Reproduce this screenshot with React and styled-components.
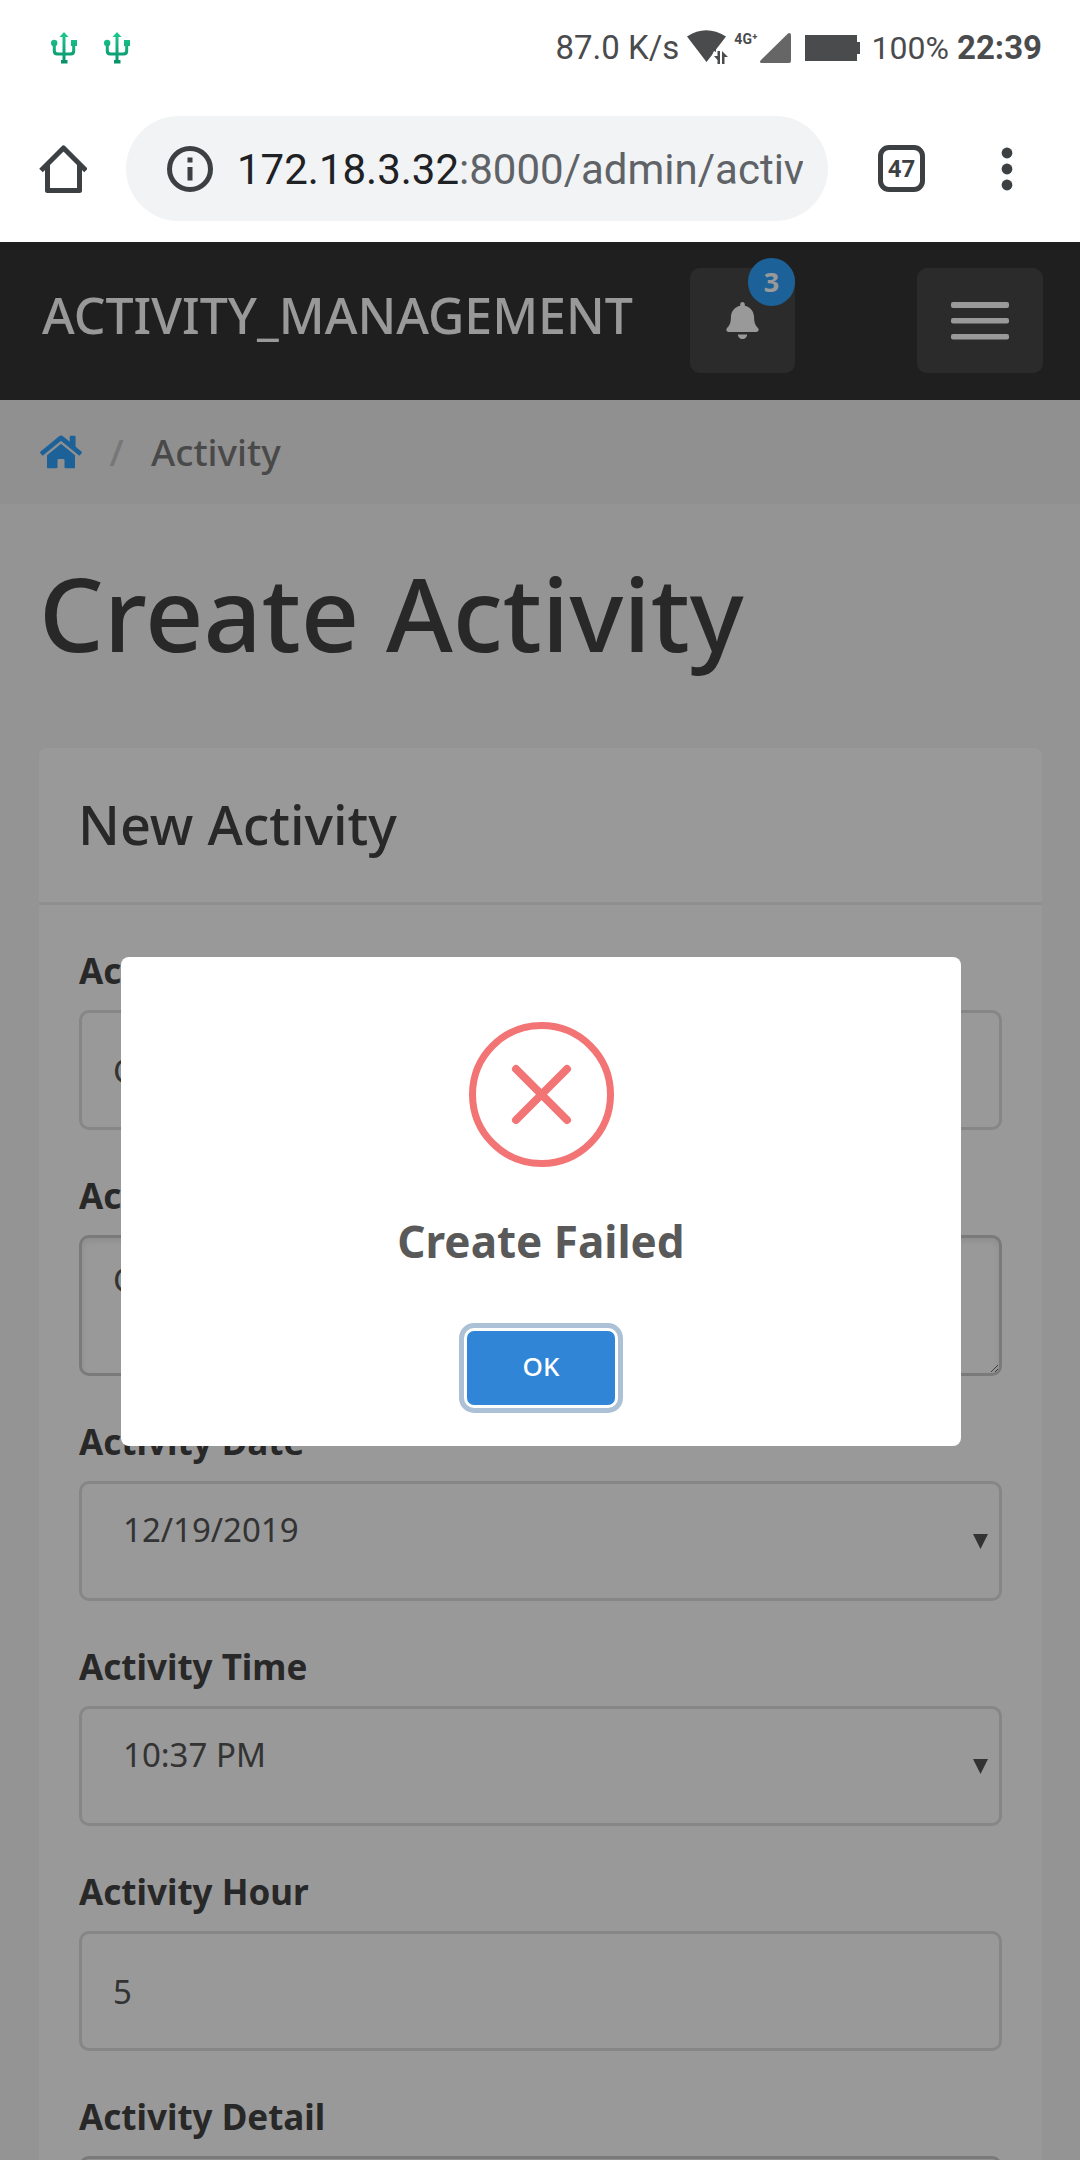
import React from "react";
import styled, { createGlobalStyle } from "styled-components";
import { FaBell, FaHome } from "react-icons/fa";

const GlobalStyle = createGlobalStyle`
  *, *::before, *::after { box-sizing: border-box; }
  body { margin: 0; background: #fff; }
  button, input, textarea, select { font: inherit; color: inherit; margin: 0; }
`;

const siteFont = `"Noto Sans", "Open Sans", sans-serif`;

const Phone = styled.div`
  display: flex;
  flex-direction: column;
  height: 100vh;
  overflow: hidden;
  font-family: Roboto, sans-serif;
`;

/* ---------- phone status bar ---------- */

const StatusBar = styled.div`
  display: flex;
  align-items: center;
  justify-content: space-between;
  flex: none;
  height: 96px;
  padding: 0 38px 0 51px;
  color: #4a4b4d;
  font-size: 33px;
  line-height: 40px;
  white-space: nowrap;
`;

const StatusGroup = styled.div`
  display: flex;
  align-items: center;
  gap: ${(p) => p.$gap}px;
`;

const Network = styled.span`
  align-self: flex-start;
  padding: 0 2px 0 5px;
  font-size: 14px;
  line-height: 22px;
  font-weight: 700;
`;

const Battery = styled.span`
  font-size: 32px;
  padding-left: 12px;
`;

const Clock = styled.span`
  font-weight: 700;
  padding-left: 8px;
`;

/* ---------- browser toolbar ---------- */

const Toolbar = styled.div`
  display: flex;
  align-items: center;
  flex: none;
  padding: 20px 67px 21px 39px;
  color: #3c4043;
`;

const ToolButton = styled.button`
  display: flex;
  align-items: center;
  justify-content: center;
  flex: none;
  padding: 0;
  border: 0;
  background: none;
`;

const TabsButton = styled(ToolButton)`
  width: 47px;
  height: 47px;
  margin: 0 76px 0 50px;
  border: 5px solid #3c4043;
  border-radius: 11px;
  font-size: 24px;
  line-height: 28px;
  font-weight: 700;
`;

const AddressBar = styled.div`
  display: flex;
  align-items: center;
  flex: 1;
  min-width: 0;
  height: 105px;
  margin-left: 39px;
  padding: 0 25px 0 41px;
  border-radius: 53px;
  background: #f1f3f4;
`;

const Address = styled.div`
  flex: 1;
  min-width: 0;
  margin-left: 24px;
  padding-top: 2px;
  overflow: hidden;
  white-space: nowrap;
  font-size: 42px;
  line-height: 56px;
  color: #5f6368;
`;

const Host = styled.span`
  color: #202124;
`;

/* ---------- web page ---------- */

const Viewport = styled.div`
  position: relative;
  flex: 1;
  min-height: 0;
  font-family: ${siteFont};
`;

const Page = styled.div`
  height: 100%;
  overflow-y: auto;
  scrollbar-width: none;
  background: #f7f7f7;
  color: #444;
`;

const Navbar = styled.header`
  display: flex;
  align-items: flex-start;
  height: 158px;
  padding: 26px 37px 0 42px;
  background: #353535;
  color: #fff;
`;

const Brand = styled.a`
  flex: 1;
  font-size: 50px;
  line-height: 94px;
  font-weight: 500;
  color: inherit;
  text-decoration: none;
`;

const NavButton = styled.button`
  position: relative;
  display: flex;
  align-items: center;
  justify-content: center;
  flex: none;
  width: ${(p) => p.$width}px;
  height: 105px;
  margin-left: ${(p) => p.$gap}px;
  padding: 0;
  border: 0;
  border-radius: 10px;
  background: #494949;
`;

const Badge = styled.span`
  position: absolute;
  top: -10px;
  right: 0;
  width: 47px;
  height: 48px;
  border-radius: 24px;
  background: #30a3ff;
  font-size: 27px;
  line-height: 48px;
  font-weight: 700;
  text-align: center;
`;

const Breadcrumb = styled.nav`
  display: flex;
  align-items: center;
  height: 104px;
  padding: 0 40px;
  background: #f0f0f0;
  font-size: 37px;
  line-height: 48px;
  font-weight: 500;
  color: #7a7a7a;
`;

const HomeLink = styled.a`
  display: flex;
  color: #30a3ff;
`;

const Slash = styled.span`
  width: 69px;
  text-align: center;
  color: #c6c6c6;
`;

const Main = styled.main`
  padding: 34px 38px 0 39px;
`;

const PageTitle = styled.h1`
  margin: 0 0 60px;
  font-size: 102px;
  line-height: 150px;
  font-weight: 500;
`;

const Card = styled.section`
  border-radius: 8px;
  background: #fff;
`;

const CardHeader = styled.div`
  padding: 38px 39px 40px;
  border-bottom: 3px solid #eee;
`;

const CardTitle = styled.h2`
  margin: 0;
  font-size: 54px;
  line-height: 76px;
  font-weight: 500;
`;

const Form = styled.form`
  display: flex;
  flex-direction: column;
  gap: 42px;
  padding: 42px 40px;
`;

const Group = styled.div`
  display: flex;
  flex-direction: column;
`;

const Label = styled.label`
  margin-bottom: 15px;
  font-size: 35px;
  line-height: 48px;
  font-weight: 700;
`;

const Input = styled.input`
  width: 100%;
  height: 120px;
  padding: 0 31px;
  border: 3px solid #dfdfdf;
  border-radius: 10px;
  outline: 0;
  background: #fff;
  color: #555;
  font-size: 33px;
`;

const TextArea = styled.textarea`
  display: block;
  width: 100%;
  height: 141px;
  padding: 18px 31px;
  border: 3px solid #cbcbcb;
  border-radius: 10px;
  outline: 0;
  background: #fff;
  box-shadow: inset 0 3px 6px rgba(0, 0, 0, 0.08);
  color: #555;
  font-size: 33px;
  line-height: 48px;
  resize: vertical;
`;

const SelectWrap = styled.div`
  position: relative;
  color: #555;
`;

const Select = styled.select`
  display: block;
  appearance: none;
  width: 100%;
  height: 120px;
  padding: 0 60px 24px 41px;
  border: 3px solid #dfdfdf;
  border-radius: 10px;
  outline: 0;
  background: #fff;
  font-size: 33px;
`;

const Caret = styled.svg`
  position: absolute;
  right: 14px;
  top: 53px;
  pointer-events: none;
`;

/* ---------- alert ---------- */

const Overlay = styled.div`
  position: absolute;
  inset: 0;
  display: flex;
  align-items: center;
  justify-content: center;
  background: rgba(0, 0, 0, 0.4);
`;

const Dialog = styled.div`
  display: flex;
  flex-direction: column;
  align-items: center;
  width: 840px;
  margin-left: 2px;
  padding: 65px 40px 41px;
  border-radius: 8px;
  background: #fff;
`;

const DialogTitle = styled.h2`
  margin: 44px 0 60px;
  font-size: 44px;
  line-height: 60px;
  font-weight: 700;
  color: #595959;
`;

const OkButton = styled.button`
  width: 148px;
  height: 74px;
  padding: 0 0 4px;
  border: 0;
  border-radius: 7px;
  outline: 0;
  background: #3085d6;
  box-shadow: 0 0 0 3px #fff, 0 0 0 8px #adc1d6;
  color: #fff;
  font-size: 26px;
  font-weight: 500;
`;

function UsbIcon() {
  return (
    <svg width="26" height="32" viewBox="0 0 26 32" fill="none" aria-hidden="true">
      <defs>
        <linearGradient id="usb" x1="0" y1="0" x2="0" y2="32" gradientUnits="userSpaceOnUse">
          <stop offset="0" stopColor="#1dcb92" />
          <stop offset="1" stopColor="#088f68" />
        </linearGradient>
      </defs>
      <g fill="url(#usb)">
        <path d="M13 0l4.500 5h-9z" />
        <path d="M11.500 3h3v25h-3z" />
        <circle cx="3.200" cy="11" r="3.200" />
        <path d="M20 8h6v6h-6zM10 28h6.500v3.500H10z" />
        <path d="M1.800 12h3v6.500q0 2 2 2h12.400q2 0 2-2V12h3v7q0 4.500-4.500 4.500H6.300q-4.500 0-4.500-4.500z" />
      </g>
    </svg>
  );
}

function WifiIcon() {
  return (
    <svg width="42" height="36" viewBox="0 0 42 36" fill="currentColor" aria-hidden="true">
      <path d="M0 6.500Q19 -6 39 6.500L29 19.500v2.500L27 21l-2 4-5.500 7z" />
      <path d="M33 21v13h-2.500v-4l-3.500-4h3.500v-5zM35 34V21l6 6h-3.500v7z" />
    </svg>
  );
}

function SignalIcon() {
  return (
    <svg width="31" height="30" viewBox="0 0 31 30" fill="#666" aria-hidden="true">
      <path d="M29 0q2 0 2 2v26q0 2-2 2H1q-2-1 0-3L28 .5z" />
    </svg>
  );
}

function BatteryIcon() {
  return (
    <svg width="55" height="26" viewBox="0 0 55 26" fill="currentColor" aria-hidden="true">
      <path d="M0 0h52v7h3v12h-3v7H0z" />
    </svg>
  );
}

function ChromeHomeIcon() {
  return (
    <svg width="48" height="48" viewBox="0 0 48 48" fill="none" stroke="currentColor" strokeWidth="5" strokeLinejoin="round" aria-hidden="true">
      <path d="M2 25.500L24.500 3 47 25.500" />
      <path d="M8.500 20v25.500h32V20" />
    </svg>
  );
}

function InfoIcon() {
  return (
    <svg width="46" height="46" viewBox="0 0 46 46" aria-hidden="true">
      <circle cx="23" cy="23" r="20.500" fill="none" stroke="currentColor" strokeWidth="5" />
      <path d="M20.500 11.500h5v5h-5zM20.500 21h5v13.500h-5z" fill="currentColor" />
    </svg>
  );
}

function DotsIcon() {
  return (
    <svg width="12" height="44" viewBox="0 0 12 44" fill="currentColor" aria-hidden="true">
      <circle cx="6" cy="6" r="5.400" />
      <circle cx="6" cy="22" r="5.400" />
      <circle cx="6" cy="38" r="5.400" />
    </svg>
  );
}

function MenuIcon() {
  return (
    <svg width="58" height="38" viewBox="0 0 58 38" fill="currentColor" aria-hidden="true">
      <rect width="58" height="6" rx="2" />
      <rect y="16" width="58" height="5.500" rx="2" />
      <rect y="32" width="58" height="5.500" rx="2" />
    </svg>
  );
}

function ErrorIcon() {
  return (
    <svg width="145" height="145" viewBox="0 0 145 145" fill="none" stroke="#f27474" strokeWidth="7" aria-hidden="true">
      <circle cx="72.500" cy="72.500" r="69" />
      <path d="M47 47l51 51M98 47L47 98" strokeWidth="8" strokeLinecap="round" />
    </svg>
  );
}

function DropField({ id, label, value }) {
  return (
    <Group>
      <Label htmlFor={id}>{label}</Label>
      <SelectWrap>
        <Select id={id} defaultValue={value}>
          <option>{value}</option>
        </Select>
        <Caret width="15" height="15" viewBox="0 0 15 15" fill="currentColor" aria-hidden="true">
          <path d="M0 0h15L7.500 15z" />
        </Caret>
      </SelectWrap>
    </Group>
  );
}

export default function App() {
  return (
    <Phone>
      <GlobalStyle />
      <StatusBar>
        <StatusGroup $gap={27}>
          <UsbIcon />
          <UsbIcon />
        </StatusGroup>
        <StatusGroup $gap={0}>
          <StatusGroup $gap={8}>
            <span>87.0 K/s</span>
            <WifiIcon />
          </StatusGroup>
          <Network>4G⁺</Network>
          <StatusGroup $gap={14}>
            <SignalIcon />
            <BatteryIcon />
          </StatusGroup>
          <Battery>100%</Battery>
          <Clock>22:39</Clock>
        </StatusGroup>
      </StatusBar>

      <Toolbar>
        <ToolButton aria-label="Home">
          <ChromeHomeIcon />
        </ToolButton>
        <AddressBar>
          <InfoIcon />
          <Address>
            <Host>172.18.3.32</Host>:8000/admin/activ
          </Address>
        </AddressBar>
        <TabsButton>47</TabsButton>
        <ToolButton aria-label="More">
          <DotsIcon />
        </ToolButton>
      </Toolbar>

      <Viewport>
        <Page>
          <Navbar>
            <Brand href="#">ACTIVITY_MANAGEMENT</Brand>
            <NavButton $width={105} $gap={0} aria-label="Notifications">
              <FaBell size={37} />
              <Badge>3</Badge>
            </NavButton>
            <NavButton $width={126} $gap={122} aria-label="Menu">
              <MenuIcon />
            </NavButton>
          </Navbar>

          <Breadcrumb>
            <HomeLink href="#" aria-label="Home">
              <FaHome size={42} />
            </HomeLink>
            <Slash>/</Slash>
            <span>Activity</span>
          </Breadcrumb>

          <Main>
            <PageTitle>Create Activity</PageTitle>
            <Card>
              <CardHeader>
                <CardTitle>New Activity</CardTitle>
              </CardHeader>
              <Form>
                <Group>
                  <Label htmlFor="name">Activity</Label>
                  <Input id="name" defaultValue="C" />
                </Group>
                <Group>
                  <Label htmlFor="place">Activity</Label>
                  <TextArea id="place" defaultValue="C" />
                </Group>
                <DropField id="date" label="Activity Date" value="12/19/2019" />
                <DropField id="time" label="Activity Time" value="10:37 PM" />
                <Group>
                  <Label htmlFor="hour">Activity Hour</Label>
                  <Input id="hour" defaultValue="5" />
                </Group>
                <Group>
                  <Label htmlFor="detail">Activity Detail</Label>
                  <TextArea id="detail" />
                </Group>
              </Form>
            </Card>
          </Main>
        </Page>

        <Overlay>
          <Dialog role="alertdialog" aria-labelledby="alert-title">
            <ErrorIcon />
            <DialogTitle id="alert-title">Create Failed</DialogTitle>
            <OkButton>OK</OkButton>
          </Dialog>
        </Overlay>
      </Viewport>
    </Phone>
  );
}
